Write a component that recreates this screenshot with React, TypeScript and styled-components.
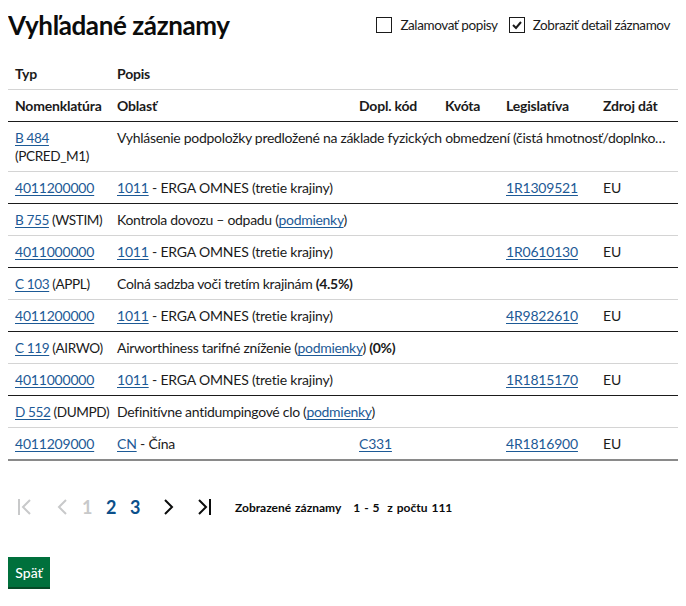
import React from 'react';
import styled, { createGlobalStyle } from 'styled-components';

const GlobalStyle = createGlobalStyle`
  body {
    margin: 8px;
    font-family: Lato, 'Liberation Sans', sans-serif;
    font-size: 14px;
    letter-spacing: -0.2px;
    color: #1b1b1b;
    background: #ffffff;
  }
`;

const Page = styled.div`
  display: flex;
  flex-direction: column;
  width: 670px;
`;

const TopBar = styled.div`
  display: flex;
  justify-content: space-between;
  align-items: center;
  height: 34px;
  margin-bottom: 16px;
`;

const Title = styled.h1`
  margin: 0;
  font-size: 26px;
  font-weight: 700;
  color: #0b0c0c;
  letter-spacing: -0.4px;
`;

const Options = styled.div`
  display: flex;
  align-items: center;
  gap: 11px;
  padding-right: 8px;
`;

const CheckLabel = styled.label`
  display: flex;
  align-items: center;
  gap: 8px;
  font-size: 13.5px;
  letter-spacing: -0.4px;
  color: #1b1b1b;
`;

const Box = styled.span`
  display: inline-flex;
  align-items: center;
  justify-content: center;
  width: 14px;
  height: 14px;
  border: 1px solid #1b1b1b;
`;

const Table = styled.table`
  width: 670px;
  border-collapse: collapse;
  table-layout: fixed;
`;

type RowProps = { $border: 'light' | 'dark' | 'last' };

const Row = styled.tr<RowProps>`
  border-bottom: ${(p) =>
    p.$border === 'light' ? '1px solid #d4d4d4' : p.$border === 'dark' ? '1px solid #1b1b1b' : '2px solid #8a8a8a'};
`;

const Th = styled.th`
  text-align: left;
  font-weight: 700;
  padding: 7px 7px 6px;
  line-height: 18px;
  white-space: nowrap;
`;

const Td = styled.td<{ $clip?: boolean }>`
  padding: 7px 7px 6px;
  line-height: 18px;
  vertical-align: top;
  ${(p) =>
    p.$clip ? 'white-space: nowrap; overflow: hidden; text-overflow: ellipsis; letter-spacing: -0.3px;' : ''}
`;

const CodeTd = styled(Td)`
  padding-right: 0;
  font-size: 13.6px;
  letter-spacing: -0.4px;
`;

const A = styled.a`
  color: #1d5a96;
  text-decoration: underline;
  text-underline-offset: 2px;
  text-decoration-thickness: 1px;
`;

const Pager = styled.div`
  display: flex;
  align-items: center;
  margin-top: 32px;
  padding-left: 7px;
  height: 28px;
`;

const PageBtn = styled.span<{ $state: 'off' | 'on' | 'nav'; $gap?: number }>`
  display: inline-flex;
  align-items: center;
  justify-content: center;
  min-width: 24px;
  height: 24px;
  margin-left: ${(p) => p.$gap ?? 0}px;
  font-size: 18px;
  font-weight: 700;
  color: ${(p) => (p.$state === 'off' ? '#c8c9ca' : p.$state === 'on' ? '#0b4f8a' : '#0b0c0c')};
`;

const Count = styled.span`
  font-size: 12px;
  font-weight: 700;
  margin-left: 20px;
  color: #0b0c0c;
  letter-spacing: 0;
  word-spacing: 1px;
`;

const CountNum = styled.span`
  margin-left: 12px;
`;

const Back = styled.button`
  align-self: flex-start;
  margin-top: 36px;
  width: 42px;
  height: 32px;
  padding: 0;
  border: none;
  border-bottom: 2px solid #054a26;
  background: #00703c;
  color: #ffffff;
  font-family: Lato, 'Liberation Sans', sans-serif;
  font-size: 14px;
  font-weight: 500;
`;

const Chevron = ({ dir, bar, color }: { dir: 'l' | 'r'; bar?: boolean; color: string }) => (
  <svg width="20" height="20" viewBox="0 0 20 20" fill="none" stroke={color} strokeWidth="2">
    {dir === 'l' ? <polyline points="13,3 6,10 13,17" /> : <polyline points="6,3 13,10 6,17" />}
    {bar && (dir === 'l' ? <line x1="2" y1="2" x2="2" y2="18" /> : <line x1="17" y1="2" x2="17" y2="18" />)}
  </svg>
);

type Item = {
  code: string;
  tag: string;
  desc: React.ReactNode;
  nomen: string;
  area: string;
  areaName: string;
  dopl?: string;
  leg: string;
};

const items: Item[] = [
  {
    code: 'B 484',
    tag: '(PCRED_M1)',
    desc: 'Vyhlásenie podpoložky predložené na základe fyzických obmedzení (čistá hmotnosť/doplnková jednotka)',
    nomen: '4011200000',
    area: '1011',
    areaName: 'ERGA OMNES (tretie krajiny)',
    leg: '1R1309521',
  },
  {
    code: 'B 755',
    tag: '(WSTIM)',
    desc: (
      <>
        Kontrola dovozu – odpadu (<A href="#">podmienky</A>)
      </>
    ),
    nomen: '4011000000',
    area: '1011',
    areaName: 'ERGA OMNES (tretie krajiny)',
    leg: '1R0610130',
  },
  {
    code: 'C 103',
    tag: '(APPL)',
    desc: (
      <>
        Colná sadzba voči tretím krajinám <b>(4.5%)</b>
      </>
    ),
    nomen: '4011200000',
    area: '1011',
    areaName: 'ERGA OMNES (tretie krajiny)',
    leg: '4R9822610',
  },
  {
    code: 'C 119',
    tag: '(AIRWO)',
    desc: (
      <>
        Airworthiness tarifné zníženie (<A href="#">podmienky</A>) <b>(0%)</b>
      </>
    ),
    nomen: '4011000000',
    area: '1011',
    areaName: 'ERGA OMNES (tretie krajiny)',
    leg: '1R1815170',
  },
  {
    code: 'D 552',
    tag: '(DUMPD)',
    desc: (
      <>
        Definitívne antidumpingové clo (<A href="#">podmienky</A>)
      </>
    ),
    nomen: '4011209000',
    area: 'CN',
    areaName: 'Čína',
    dopl: 'C331',
    leg: '4R1816900',
  },
];

export default function App() {
  return (
    <>
      <GlobalStyle />
      <Page>
        <TopBar>
          <Title>Vyhľadané záznamy</Title>
          <Options>
            <CheckLabel>
              <Box />
              Zalamovať popisy
            </CheckLabel>
            <CheckLabel>
              <Box>
                <svg width="12" height="12" viewBox="0 0 12 12" fill="none" stroke="#1b1b1b" strokeWidth="2">
                  <polyline points="2,6 5,9 10,3" />
                </svg>
              </Box>
              Zobraziť detail záznamov
            </CheckLabel>
          </Options>
        </TopBar>
        <Table>
          <colgroup>
            <col style={{ width: 102 }} />
            <col style={{ width: 242 }} />
            <col style={{ width: 86 }} />
            <col style={{ width: 61 }} />
            <col style={{ width: 97 }} />
            <col style={{ width: 82 }} />
          </colgroup>
          <thead>
            <Row $border="light">
              <Th>Typ</Th>
              <Th colSpan={5}>Popis</Th>
            </Row>
            <Row $border="dark">
              <Th>Nomenklatúra</Th>
              <Th>Oblasť</Th>
              <Th>Dopl. kód</Th>
              <Th>Kvóta</Th>
              <Th>Legislatíva</Th>
              <Th>Zdroj dát</Th>
            </Row>
          </thead>
          <tbody>
            {items.map((it, i) => (
              <React.Fragment key={it.code}>
                <Row $border="light">
                  <CodeTd>
                    <A href="#">{it.code}</A> {it.tag}
                  </CodeTd>
                  <Td colSpan={5} $clip>
                    {it.desc}
                  </Td>
                </Row>
                <Row $border={i === items.length - 1 ? 'last' : 'dark'}>
                  <Td>
                    <A href="#">{it.nomen}</A>
                  </Td>
                  <Td>
                    <A href="#">{it.area}</A> - {it.areaName}
                  </Td>
                  <Td>{it.dopl && <A href="#">{it.dopl}</A>}</Td>
                  <Td />
                  <Td>
                    <A href="#">{it.leg}</A>
                  </Td>
                  <Td>EU</Td>
                </Row>
              </React.Fragment>
            ))}
          </tbody>
        </Table>
        <Pager>
          <PageBtn $state="off">
            <Chevron dir="l" bar color="#c8c9ca" />
          </PageBtn>
          <PageBtn $state="off" $gap={12}>
            <Chevron dir="l" color="#c8c9ca" />
          </PageBtn>
          <PageBtn $state="off">1</PageBtn>
          <PageBtn $state="on">2</PageBtn>
          <PageBtn $state="on">3</PageBtn>
          <PageBtn $state="nav" $gap={10}>
            <Chevron dir="r" color="#0b0c0c" />
          </PageBtn>
          <PageBtn $state="nav" $gap={10}>
            <Chevron dir="r" bar color="#0b0c0c" />
          </PageBtn>
          <Count>
            Zobrazené záznamy<CountNum>1 - 5&nbsp; z počtu 111</CountNum>
          </Count>
        </Pager>
        <Back>Späť</Back>
      </Page>
    </>
  );
}
